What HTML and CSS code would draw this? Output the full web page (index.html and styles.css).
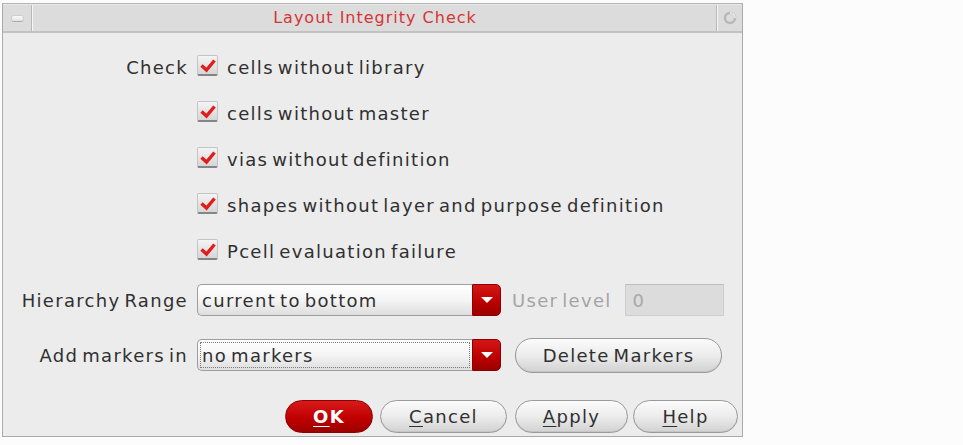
FILE: index.html
```html
<!DOCTYPE html>
<html>
<head>
<meta charset="utf-8">
<link rel="stylesheet" href="styles.css">
</head>
<body>
<div class="dialog">
  <div class="titlebar">
    <div class="tb-left"><span class="tb-min"></span></div>
    <div class="tb-title">Layout Integrity Check</div>
    <div class="tb-right">
      <svg width="14" height="14" viewBox="0 0 14 14"><circle cx="7" cy="7" r="5" fill="none" stroke="#b8b8b8" stroke-width="2.4"/><path d="M7 2 A5 5 0 0 1 12 7" fill="none" stroke="#e6e6e6" stroke-width="2"/></svg>
    </div>
  </div>
  <div class="form">
    <div class="label">Check</div>
    <div class="check"><span class="box"><svg width="16" height="14" viewBox="0 0 16 14"><path d="M1.5 6.5 L6.5 11 L14.5 1.5" fill="none" stroke="#e21b1b" stroke-width="3.4"/></svg></span>cells without library</div>
    <div class="label"></div>
    <div class="check"><span class="box"><svg width="16" height="14" viewBox="0 0 16 14"><path d="M1.5 6.5 L6.5 11 L14.5 1.5" fill="none" stroke="#e21b1b" stroke-width="3.4"/></svg></span>cells without master</div>
    <div class="label"></div>
    <div class="check"><span class="box"><svg width="16" height="14" viewBox="0 0 16 14"><path d="M1.5 6.5 L6.5 11 L14.5 1.5" fill="none" stroke="#e21b1b" stroke-width="3.4"/></svg></span>vias without definition</div>
    <div class="label"></div>
    <div class="check"><span class="box"><svg width="16" height="14" viewBox="0 0 16 14"><path d="M1.5 6.5 L6.5 11 L14.5 1.5" fill="none" stroke="#e21b1b" stroke-width="3.4"/></svg></span>shapes without layer and purpose definition</div>
    <div class="label"></div>
    <div class="check"><span class="box"><svg width="16" height="14" viewBox="0 0 16 14"><path d="M1.5 6.5 L6.5 11 L14.5 1.5" fill="none" stroke="#e21b1b" stroke-width="3.4"/></svg></span>Pcell evaluation failure</div>

    <div class="label">Hierarchy Range</div>
    <div class="ctrl">
      <div class="combo"><span class="combo-text">current to bottom</span></div>
      <div class="drop"><span class="tri"></span></div>
      <span class="dim">User level</span>
      <div class="field">0</div>
    </div>

    <div class="label">Add markers in</div>
    <div class="ctrl">
      <div class="combo"><span class="combo-text focus">no markers</span></div>
      <div class="drop"><span class="tri"></span></div>
      <button class="btn btn-del">Delete Markers</button>
    </div>
  </div>
  <div class="buttons">
    <button class="btn btn-ok"><u>O</u>K</button>
    <button class="btn btn-cancel"><u>C</u>ancel</button>
    <button class="btn btn-apply"><u>A</u>pply</button>
    <button class="btn btn-help"><u>H</u>elp</button>
  </div>
</div>
</body>
</html>
```

FILE: styles.css
```css
html, body { margin: 0; padding: 0; }
body {
  background: #fcfcfc;
  font-family: "DejaVu Sans", "Liberation Sans", sans-serif;
  width: 963px;
  height: 445px;
  overflow: hidden;
}
.dialog {
  margin: 3px 0 0 2px;
  width: 739px;
  height: 432px;
  border: 1px solid #a9a9a9;
  border-top-color: #b4b4b4;
  background: #ececec;
  display: flex;
  flex-direction: column;
}
.titlebar {
  height: 26px;
  display: flex;
  background: #dcdcdc;
  border-bottom: 2px solid #c2c2c2;
  border-top: 1px solid #e8e8e8;
}
.tb-left {
  width: 28px;
  border-right: 1px solid #b8b8b8;
  box-shadow: 1px 0 0 #f6f6f6;
  display: flex;
  align-items: center;
  justify-content: center;
}
.tb-min {
  width: 11px;
  height: 5px;
  border-radius: 2px;
  background: linear-gradient(#fafafa, #e2e2e2);
  box-shadow: 0 1px 0 #a8a8a8, 0 0 0 1px #cfcfcf;
}
.tb-title {
  flex: 1;
  text-align: center;
  color: #d43636;
  font-size: 16px;
  letter-spacing: 1px;
  line-height: 26px;
  padding-left: 2px;
}
.tb-right {
  width: 25px;
  border-left: 1px solid #b8b8b8;
  box-shadow: inset 1px 0 0 #f6f6f6;
  display: flex;
  align-items: center;
  justify-content: center;
}
.form {
  display: grid;
  grid-template-columns: 185px auto;
  grid-template-rows: repeat(5, 46px) 52px 58px;
  column-gap: 9px;
  padding-top: 11px;
  color: #303030;
  font-size: 18px;
  letter-spacing: 1.3px;
  word-spacing: -3px;
}
.label {
  text-align: right;
  display: flex;
  align-items: center;
  justify-content: flex-end;
}
.check {
  display: flex;
  align-items: center;
}
.box {
  width: 21px;
  height: 21px;
  margin-right: 9px;
  margin-top: -3px;
  border: 1px solid #c4c4c4;
  border-bottom: 2px solid #858585;
  border-radius: 2px;
  background: linear-gradient(#f4f4f4, #d6d6d6);
  display: flex;
  align-items: center;
  justify-content: center;
  box-sizing: border-box;
}
.box svg { margin-top: 1px; }
.ctrl {
  display: flex;
  align-items: center;
}
.combo {
  width: 275px;
  height: 32px;
  box-sizing: border-box;
  border: 1px solid #9e9e9e;
  border-right: none;
  border-radius: 5px 0 0 5px;
  background: linear-gradient(#ffffff, #f4f4f4 50%, #dedede);
  display: flex;
  align-items: center;
  padding: 2px;
}
.combo-text {
  flex: 1;
  height: 100%;
  box-sizing: border-box;
  display: flex;
  align-items: center;
  padding-left: 1px;
  border: 1px solid transparent;
}
.combo-text.focus { border: 1px dotted #7a7a7a; }
.drop {
  width: 29px;
  height: 32px;
  box-sizing: border-box;
  border-radius: 0 5px 5px 0;
  background: linear-gradient(#d51616, #b90000 60%, #9a0000);
  border: 1px solid #8e0000;
  display: flex;
  align-items: center;
  justify-content: center;
}
.tri {
  width: 0;
  height: 0;
  border-left: 6px solid transparent;
  border-right: 6px solid transparent;
  border-top: 6px solid #ffffff;
}
.dim {
  color: #a4a4a4;
  margin-left: 11px;
  margin-right: 13px;
}
.field {
  width: 99px;
  height: 32px;
  box-sizing: border-box;
  background: #dcdcdc;
  border: 1px solid #cdcdcd;
  border-top-color: #bdbdbd;
  color: #a8a8a8;
  padding-left: 7px;
  display: flex;
  align-items: center;
}
.btn {
  font-family: "DejaVu Sans", "Liberation Sans", sans-serif;
  font-size: 18px;
  letter-spacing: 1.3px;
  word-spacing: -3px;
  color: #303030;
  height: 35px;
  box-sizing: border-box;
  border: 1px solid #9a9a9a;
  border-radius: 17px;
  background: linear-gradient(#fbfbfb, #ececec 50%, #d2d2d2);
  box-shadow: inset 0 -1px 0 #c4c4c4;
  padding: 0;
  margin: 0;
}
.btn u { text-decoration-thickness: 1px; text-underline-offset: 3px; }
.btn-del { width: 207px; margin-left: 14px; }
.buttons {
  display: flex;
  justify-content: flex-start;
  padding-left: 282px;
  margin-top: 16px;
}
.buttons .btn { height: 33px; }
.btn-ok {
  width: 88px;
  background: linear-gradient(#d71a1a, #c00000 55%, #9c0000);
  border-color: #8c0000;
  color: #ffffff;
  font-weight: bold;
  box-shadow: none;
}
.btn-cancel { width: 127px; margin-left: 7px; }
.btn-apply { width: 113px; margin-left: 8px; }
.btn-help { width: 105px; margin-left: 5px; }
```
